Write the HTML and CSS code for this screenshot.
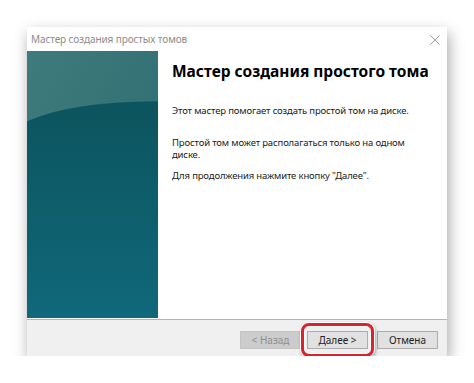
FILE: index.html
```html
<!DOCTYPE html>
<html lang="ru">
<head>
  <meta charset="UTF-8" />
  <title>Мастер создания простых томов</title>
  <link rel="stylesheet" href="styles.css">
</head>
<body>
  <div class="wizard">
    <div class="titlebar">
      <span class="title">Мастер создания простых томов</span>
      <svg class="close" width="10" height="10" viewBox="0 0 10 10">
        <path d="M0.5 0.5 L9.5 9.5 M9.5 0.5 L0.5 9.5" stroke="#9a9a9a" stroke-width="1" fill="none"/>
      </svg>
    </div>

    <div class="body">
      <div class="side">
        <svg width="131" height="267" viewBox="0 0 131 267" preserveAspectRatio="none">
          <defs>
            <linearGradient id="top" x1="0" y1="0" x2="1" y2="1">
              <stop offset="0" stop-color="#3e7b7c"/>
              <stop offset="1" stop-color="#2a6a6f"/>
            </linearGradient>
            <linearGradient id="low" x1="0" y1="0" x2="0" y2="1">
              <stop offset="0" stop-color="#0c545e"/>
              <stop offset="1" stop-color="#10687a"/>
            </linearGradient>
          </defs>
          <rect width="131" height="267" fill="url(#top)"/>
          <path d="M0 70 Q45 50 131 50 L131 267 L0 267 Z" fill="url(#low)"/>
          <path d="M0 70 Q45 50 131 50" stroke="#4a8486" stroke-width="0.8" fill="none" opacity="0.5"/>
        </svg>
      </div>

      <div class="main">
        <h1>Мастер создания простого тома</h1>
        <p class="first">Этот мастер помогает создать простой том на диске.</p>
        <p>Простой том может располагаться только на одном<br>диске.</p>
        <p>Для продолжения нажмите кнопку "Далее".</p>
      </div>
    </div>

    <div class="footer">
      <button class="btn disabled">&lt; Назад</button>
      <span class="marked">
        <button class="btn">Далее &gt;</button>
      </span>
      <button class="btn cancel">Отмена</button>
    </div>
  </div>
</body>
</html>
```

FILE: styles.css
```css
body {
  margin: 0;
  background: #fff;
  font-family: "Noto Sans", Arial, sans-serif;
}
.wizard {
  margin: 27px 0 0 27px;
  width: 420px;
  height: 329px;
  background: #fff;
  display: flex;
  flex-direction: column;
  box-shadow: 2px 6px 14px rgba(0,0,0,0.35);
}
.titlebar {
  height: 24px;
  display: flex;
  align-items: center;
  justify-content: space-between;
  padding: 0 7px 0 4px;
}
.title {
  font-size: 10px;
  letter-spacing: -0.1px;
  color: #8c8c8c;
}
.close {
  margin-top: 1px;
}
.body {
  flex: 1;
  display: flex;
}
.side {
  width: 131px;
  height: 267px;
}
.side svg {
  display: block;
}
.main {
  padding: 9px 0 0 14px;
  color: #1a1a1a;
}
h1 {
  margin: 0 0 23px;
  font-size: 15.5px;
  font-weight: bold;
  color: #000;
}
.main p {
  margin: 0 0 9px;
  font-size: 9.5px;
  letter-spacing: -0.15px;
  line-height: 12px;
}
.main p.first {
  margin-bottom: 20px;
}
.footer {
  height: 37px;
  background: #f0f0f0;
  border-top: 1px solid #b4b4b4;
  box-sizing: border-box;
  display: flex;
  justify-content: flex-end;
  align-items: center;
  padding: 4px 9px 0 0;
  gap: 6px;
}
.btn {
  width: 61px;
  height: 18px;
  padding: 0;
  font-family: "Noto Sans", Arial, sans-serif;
  font-size: 10px;
  color: #222;
  background: #e1e1e1;
  border: 1px solid #adadad;
}
.btn.disabled {
  background: #cccccc;
  border-color: #c4c4c4;
  color: #8e8e8e;
}
.btn.cancel {
  margin-left: 3px;
}
.marked {
  position: relative;
  display: flex;
}
.marked::after {
  content: "";
  position: absolute;
  left: -6px;
  right: -6px;
  top: -8px;
  bottom: -8px;
  border: 3px solid #d9232d;
  border-radius: 8px;
  box-shadow: 0 0 0 1px #fff, 1px 2px 4px rgba(0,0,0,0.45), inset 0 0 0 1px #fff;
}
```
